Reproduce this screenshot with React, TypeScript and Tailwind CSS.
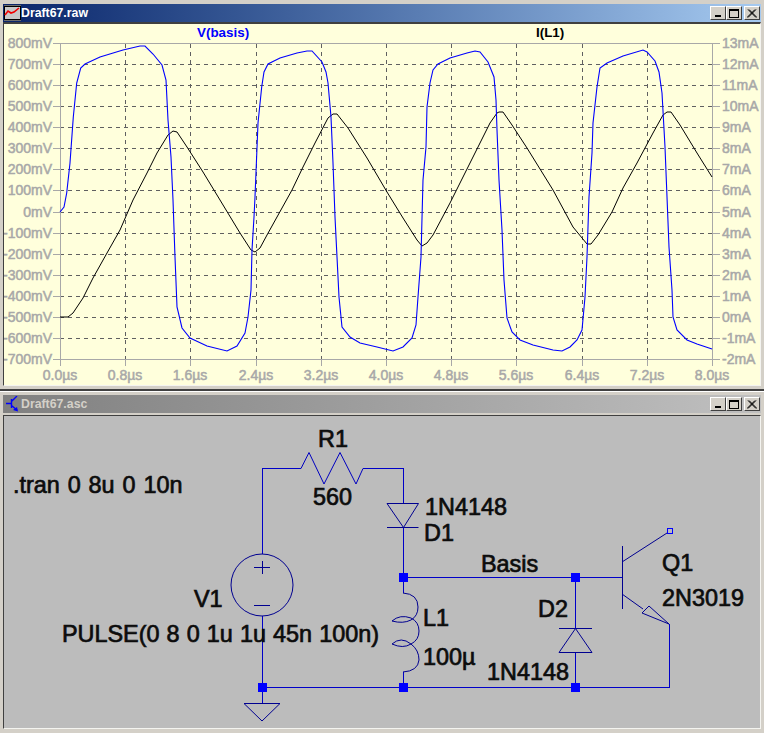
const gridX = [125, 190, 256, 321, 386, 451, 516, 582, 647];
const tickX = [60, 125, 190, 256, 321, 386, 451, 516, 582, 647, 712];
const timeLabels = ["0.0µs", "0.8µs", "1.6µs", "2.4µs", "3.2µs", "4.0µs", "4.8µs", "5.6µs", "6.4µs", "7.2µs", "8.0µs"];
const tickY = [43, 64, 85, 106, 127, 148, 169, 190, 212, 233, 254, 275, 296, 317, 338, 359];
const leftLabels = ["800mV", "700mV", "600mV", "500mV", "400mV", "300mV", "200mV", "100mV", "0mV", "-100mV", "-200mV", "-300mV", "-400mV", "-500mV", "-600mV", "-700mV"];
const rightLabels = ["13mA", "12mA", "11mA", "10mA", "9mA", "8mA", "7mA", "6mA", "5mA", "4mA", "3mA", "2mA", "1mA", "0mA", "-1mA", "-2mA"];

const blue =
  "60,212 64,207 66.7,193 70,163 73.3,117 76.7,83 80.7,68 85,64 100,57 123,50 140,46 145,46 153,54 162,65 166,80 168,120 171,157 173,200 175,257 177,307 182,328 190,338 207,346 227,351 237,346 245,333 248,317 251,290 252,250 254,217 255,197 258,123 261.7,87 264,72 268,64 280,58 297,53 307,51 312,51 322,62 326,72 328,83 331,117 333,163 335,217 337,257 339,297 342,327 350,337 360,343 377,347 393,351 403,347 412,338 416,325 418,297 421,257 423,180 426,147 427,107 430,83 433,70 438,64 450,58 467,53 475,51 480,52 488,62 494,77 496,100 497,130 499,180 502,230 504,280 507,318 512,332 520,340 533,345 553,350 562,351 570,347 577,340 582,330 585,297 587,257 589,197 592,153 593,123 597,87 600,68 607,63 623,56 643,50 647,52 655,61 659,72 662,93 665,147 667,197 669,247 672,290 673,317 677,330 687,340 697,344 712,349";
const black =
  "60,317 68,317 73,313 83,298 93,278 107,253 120,230 133,200 147,173 157,153 168,135 173,131 177,132 187,147 203,172 220,200 240,233 251,250 255,252 260,248 267,235 292,190 303,167 315,143 328,118 333,114 337,114 348,128 367,158 387,192 403,218 417,240 422,246 427,243 433,235 450,203 470,163 490,123 497,113 499,112 503,112 512,125 527,148 553,190 573,227 587,244 591,244 598,235 612,212 623,188 637,163 653,133 663,115 667,112 671,112 680,125 697,153 712,177";

function CaptionButtons() {
  const cls =
    "w-[16px] h-[14px] bg-[#d4d0c8] border border-t-white border-l-white border-r-[#404040] border-b-[#404040] flex items-center justify-center";
  return (
    <div className="flex items-center mr-[1px]">
      <div className={cls + " items-end pb-[2px]"}>
        <div className="w-[6px] h-[2px] bg-black" />
      </div>
      <div className={cls}>
        <div className="w-[10px] h-[9px] border border-black border-t-2" />
      </div>
      <div className={cls + " ml-[2px]"}>
        <svg width="10" height="9" viewBox="0 0 10 9">
          <path d="M1 0.5L9 8.5M2 0.5L10 8.5M9 0.5L1 8.5M8 0.5L0 8.5" stroke="#000" strokeWidth="1" fill="none" />
        </svg>
      </div>
    </div>
  );
}

function FilmIcon() {
  return (
    <svg width="17" height="16" viewBox="0 0 17 16" className="shrink-0">
      <rect x="0" y="0" width="17" height="16" fill="#000" />
      <rect x="1" y="2" width="15" height="12" fill="#c8c8c8" />
      <path d="M0.5 0.5H17M0.5 15.5H17" stroke="#d8d8d8" strokeWidth="1" strokeDasharray="1 1" />
      <path d="M1 10L4 6L7 8L10 7L15 3" stroke="#f00000" strokeWidth="1.6" fill="none" />
    </svg>
  );
}

function TransistorIcon() {
  return (
    <svg width="13" height="16" viewBox="0 0 13 16" className="shrink-0">
      <path d="M5.5 3V12M0 7.5H5.5M5.5 5.5L11 0M5.5 9.5L11 14" stroke="#0000ff" strokeWidth="1.4" fill="none" />
      <path d="M7 14L12 15.5L11 11Z" fill="#0000ff" />
    </svg>
  );
}

function TitleBar({ active, title }: { active: boolean; title: string }) {
  return (
    <div
      className={
        active
          ? "flex items-center h-[18px] mx-[3px] bg-gradient-to-r from-[#0a246a] to-[#a6caf0]"
          : "flex items-center h-[18px] mx-[3px] bg-gradient-to-r from-[#808080] to-[#c0c0c0]"
      }
    >
      <div className={active ? "w-[18px] pl-[1px]" : "w-[18px] pl-[3px]"}>
        {active ? <FilmIcon /> : <TransistorIcon />}
      </div>
      <span
        className={
          active
            ? "text-[12.3px] font-bold text-white leading-none"
            : "text-[12.3px] font-bold text-[#d4d0c8] leading-none"
        }
      >
        {title}
      </span>
      <div className="flex-1" />
      <CaptionButtons />
    </div>
  );
}

function Plot() {
  return (
    <svg width="756" height="361" viewBox="4 24 756 361" className="block bg-[#ffffdc]">
      <g shapeRendering="crispEdges" fill="none" strokeWidth="1">
        {tickY.slice(1, -1).map((y) => (
          <line key={y} x1="60" x2="712" y1={y + 0.5} y2={y + 0.5} stroke="#606060" strokeDasharray="4 4" />
        ))}
        {gridX.map((x) => (
          <line key={x} x1={x + 0.5} x2={x + 0.5} y1="44" y2="359" stroke="#606060" strokeDasharray="4 4" />
        ))}
        <rect x="60.5" y="43.5" width="652" height="316" stroke="#a8a8a8" />
        {tickY.map((y) => (
          <path key={y} d={`M53 ${y + 0.5}H60M713 ${y + 0.5}H720`} stroke="#a8a8a8" />
        ))}
        {tickX.map((x) => (
          <path key={x} d={`M${x + 0.5} 360V366`} stroke="#a8a8a8" />
        ))}
      </g>
      <polyline points={black} fill="none" stroke="#000000" strokeWidth="1" />
      <polyline points={blue} fill="none" stroke="#0000ff" strokeWidth="1.1" />
      <g fill="#a8a8a8" stroke="#a8a8a8" strokeWidth="0.5" fontSize="14">
        {tickY.map((y, i) => (
          <text key={y} x="52" y={y + 5} textAnchor="end">
            {leftLabels[i]}
          </text>
        ))}
        {tickY.map((y, i) => (
          <text key={y} x="722" y={y + 5}>
            {rightLabels[i]}
          </text>
        ))}
        {tickX.map((x, i) => (
          <text key={x} x={x} y="380" textAnchor="middle">
            {timeLabels[i]}
          </text>
        ))}
      </g>
      <text x="197" y="37" fontSize="13.4" fontWeight="700" fill="#0000ff">
        V(basis)
      </text>
      <text x="536" y="37" fontSize="13.4" fontWeight="700" fill="#000000">
        I(L1)
      </text>
    </svg>
  );
}

function Node({ x, y }: { x: number; y: number }) {
  return <rect x={x - 4.5} y={y - 4.5} width="9" height="9" fill="#0000ff" />;
}

function Schematic() {
  const labels: [string, number, number, number][] = [
    ["R1", 318, 447, 0],
    ["560", 313, 505, 0],
    ["1N4148", 425, 515, 0],
    ["D1", 424, 541, 0],
    [".tran 0 8u 0 10n", 13, 493, 1.4],
    ["V1", 194, 607, 0],
    ["PULSE(0 8 0 1u 1u 45n 100n)", 62, 642, 0.6],
    ["L1", 423, 626, 0],
    ["100µ", 423, 665, 0],
    ["Basis", 481, 572, 0],
    ["Q1", 662, 571, 0],
    ["2N3019", 662, 606, 0],
    ["D2", 538, 617, 0],
    ["1N4148", 487, 680, 0],
  ];
  return (
    <svg width="756" height="312" viewBox="4 416 756 312" className="block bg-[#bcbcbc]">
      <g fill="none" stroke="#0000c8" strokeWidth="1" shapeRendering="crispEdges">
        <path d="M262.5 554V468.5H301M363 468.5H403.5V503M403.5 527V593M403.5 672V687.5M262.5 616V703M262.5 687.5H669.5V624M403.5 577.5H622M575.5 577.5V628M575.5 652V687.5" />
      </g>
      <g fill="none" stroke="#000090" strokeWidth="1">
        <path d="M301 468.5L309 452.5L324 484L340 452.5L356 484L363 468.5" stroke="#0000c0" />
        <path d="M387 503.5H418.5L403.5 527.5ZM387 527.5H418.5" />
        <circle cx="262" cy="585" r="31" />
        <path d="M254 567.5H270M262.5 561V574M254 605.5H270" />
        <path d="M403 593Q418 594 418 607Q418 616 411 620Q403 624 392 621Q400 614 411 618Q419 622 419 631Q419 640 411 644Q403 649 392 644Q401 636 411 644Q419 650 419 660Q418 671 403 672" />
        <path d="M559 628.5H592M575.5 628.5L592 652.5H559Z" />
        <path d="M622.5 546V609M622 562L667 533M622 594L643 609M642 613L649 606L669 624Z" />
        <rect x="667.5" y="528.5" width="5" height="5" stroke="#0000ff" />
        <path d="M244 703.5H280L262 721Z" />
      </g>
      <Node x={403.5} y={577.5} />
      <Node x={575.5} y={577.5} />
      <Node x={262.5} y={687.5} />
      <Node x={403.5} y={687.5} />
      <Node x={575.5} y={687.5} />
      <g fill="#0c0c0c" stroke="#0c0c0c" strokeWidth="0.7" fontSize="23.4">
        {labels.map(([t, x, y, ws]) => (
          <text key={t + x} x={x} y={y} wordSpacing={ws}>
            {t}
          </text>
        ))}
      </g>
    </svg>
  );
}

export default function App() {
  return (
    <div className="w-[764px] h-[733px] overflow-hidden flex flex-col bg-[#d4d0c8] font-['Liberation_Sans',sans-serif]">
      <div className="h-[391px] pt-[4px] flex flex-col border-b-2 border-b-[#404040]">
        <TitleBar active title="Draft67.raw" />
        <div className="mx-[3px] w-[758px] border-t-2 border-l border-r border-b border-t-[#404040] border-l-[#404040] border-r-[#f4f4f0] border-b-[#f4f4f0]">
          <Plot />
        </div>
      </div>
      <div className="flex flex-col pt-[3px] border-t border-t-white">
        <TitleBar active={false} title="Draft67.asc" />
        <div className="mx-[3px] w-[758px] mt-[2px] border-t border-l border-r border-b border-t-[#404040] border-l-[#404040] border-r-[#f4f4f0] border-b-[#f4f4f0]">
          <Schematic />
        </div>
      </div>
    </div>
  );
}
